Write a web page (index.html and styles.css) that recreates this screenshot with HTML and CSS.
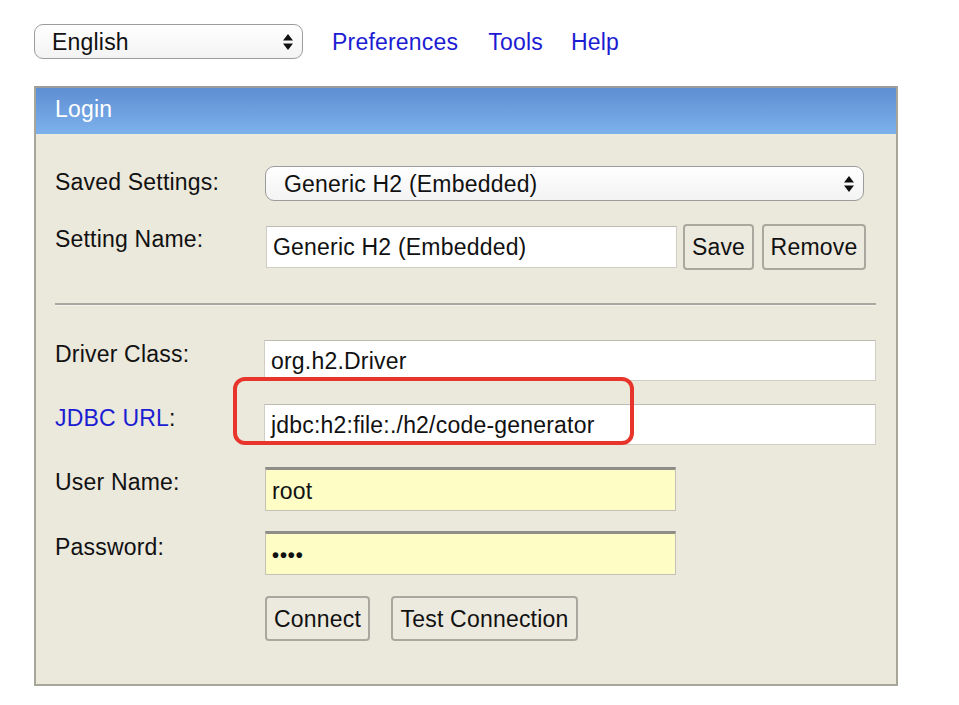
FILE: index.html
```html
<!DOCTYPE html>
<html>
<head>
<meta charset="utf-8">
<link rel="stylesheet" href="styles.css">
</head>
<body>
<div class="topbar">
  <div class="select lang">
    <span>English</span>
    <svg class="arrows" width="12" height="18" viewBox="0 0 12 18"><path d="M6 1 L11 7.5 L1 7.5 Z M1 10.5 L11 10.5 L6 17 Z" fill="#111"/></svg>
  </div>
  <a class="link link-pref" href="#">Preferences</a>
  <a class="link link-tools" href="#">Tools</a>
  <a class="link link-help" href="#">Help</a>
</div>

<div class="panel">
  <div class="panel-head">Login</div>
  <div class="panel-body">
    <div class="row row-saved">
      <div class="label">Saved Settings:</div>
      <div class="select saved">
        <span>Generic H2 (Embedded)</span>
        <svg class="arrows" width="12" height="18" viewBox="0 0 12 18"><path d="M6 1 L11 7.5 L1 7.5 Z M1 10.5 L11 10.5 L6 17 Z" fill="#111"/></svg>
      </div>
    </div>
    <div class="row row-name">
      <div class="label">Setting Name:</div>
      <div class="field field-name">Generic H2 (Embedded)</div>
      <div class="btn btn-save">Save</div>
      <div class="btn btn-remove">Remove</div>
    </div>
    <div class="rule"></div>
    <div class="row row-driver">
      <div class="label">Driver Class:</div>
      <div class="field field-wide">org.h2.Driver</div>
    </div>
    <div class="row row-url">
      <div class="label"><a class="link-plain" href="#">JDBC URL</a>:</div>
      <div class="field field-wide">jdbc:h2:file:./h2/code-generator</div>
      <div class="highlight"></div>
    </div>
    <div class="row row-user">
      <div class="label">User Name:</div>
      <div class="field field-yellow">root</div>
    </div>
    <div class="row row-pass">
      <div class="label">Password:</div>
      <div class="field field-yellow"><span class="dots">••••</span></div>
    </div>
    <div class="row row-buttons">
      <div class="label"></div>
      <div class="btn btn-connect">Connect</div>
      <div class="btn btn-test">Test Connection</div>
    </div>
  </div>
</div>
</body>
</html>
```
FILE: styles.css
```css
html, body {
  margin: 0;
  padding: 0;
  background: #ffffff;
}
body {
  font-family: "Liberation Sans", Arial, sans-serif;
  font-size: 23px;
  letter-spacing: 0.2px;
  color: #111111;
}
.topbar {
  display: flex;
  align-items: center;
  padding: 24px 0 0 34px;
  height: 35px;
}
.select {
  box-sizing: border-box;
  display: flex;
  align-items: center;
  justify-content: space-between;
  border: 1px solid #9c9c9c;
  border-radius: 9px;
  background: linear-gradient(#ffffff, #f3f3f3);
  line-height: 26px;
}
.lang {
  width: 269px;
  height: 35px;
  padding: 0 8px 0 17px;
}
.arrows {
  display: block;
  flex: none;
}
.link {
  color: #1c1cd2;
  text-decoration: none;
  line-height: 26px;
}
.link-pref { margin-left: 29px; }
.link-tools { margin-left: 30px; }
.link-help { margin-left: 28px; }
.panel {
  box-sizing: border-box;
  margin: 27px 0 0 34px;
  width: 864px;
  border: 2px solid #a8a699;
  border-top-color: #9c9c9a;
  background: #ebe8dc;
}
.panel-head {
  height: 46px;
  box-sizing: border-box;
  padding: 8px 0 0 19px;
  line-height: 26px;
  color: #ffffff;
  background: linear-gradient(#5e8ed3, #7db1ec);
}
.panel-body {
  padding: 0 20px 43px 19px;
}
.row {
  display: flex;
  align-items: flex-start;
  position: relative;
}
.label {
  width: 210px;
  flex: none;
  line-height: 26px;
  padding-top: 2px;
}
.row-saved { margin-top: 32px; }
.row-saved .label { padding-top: 3px; }
.saved {
  width: 599px;
  height: 35px;
  padding: 0 8px 0 18px;
}
.row-name { margin-top: 23px; }
.row-name .label { padding-top: 2px; }
.field {
  box-sizing: border-box;
  display: flex;
  align-items: center;
  background: #ffffff;
  border: 1px solid #cfcdc6;
  border-top-color: #bdbbb4;
  padding: 0 6px;
  line-height: 26px;
  white-space: nowrap;
}
.field-name {
  width: 411px;
  height: 42px;
  margin-top: 2px;
  margin-left: 1px;
}
.btn {
  box-sizing: border-box;
  display: flex;
  align-items: center;
  justify-content: center;
  border: 2px solid #a9a79e;
  border-radius: 4px;
  background: #ece9de;
  line-height: 26px;
  flex: none;
}
.btn-save {
  width: 71px;
  height: 46px;
  margin-left: 6px;
}
.btn-remove {
  width: 104px;
  height: 46px;
  margin-left: 8px;
}
.rule {
  margin-top: 33px;
  height: 2px;
  background: #a8a69e;
  border-bottom: 1px solid #f4f2ea;
}
.row-driver { margin-top: 34px; }
.row-driver .label { padding-top: 1px; }
.field-wide {
  width: 612px;
  height: 41px;
  margin-left: -1px;
}
.row-url { margin-top: 23px; }
.row-url .label { padding-top: 1px; }
.link-plain {
  color: #1c1cd2;
  text-decoration: none;
}
.highlight {
  position: absolute;
  left: 178px;
  top: -27px;
  width: 401px;
  height: 68px;
  box-sizing: border-box;
  border: 4px solid #e8352c;
  border-radius: 12px;
}
.row-user { margin-top: 22px; }
.row-pass { margin-top: 20px; }
.field-yellow {
  width: 411px;
  height: 44px;
  background: #fdfdc5;
  border: 1px solid #c4c2b8;
  border-top: 3px solid #8e8d88;
  padding-top: 1px;
}
.row-user .label { padding-top: 2px; }
.row-pass .label { padding-top: 3px; }
.dots {
  font-size: 20px;
  letter-spacing: 0.9px;
  font-weight: bold;
}
.row-buttons { margin-top: 21px; }
.row-buttons .label { padding-top: 0; }
.btn-connect {
  width: 105px;
  height: 45px;
}
.btn-test {
  width: 187px;
  height: 45px;
  margin-left: 21px;
}
```
